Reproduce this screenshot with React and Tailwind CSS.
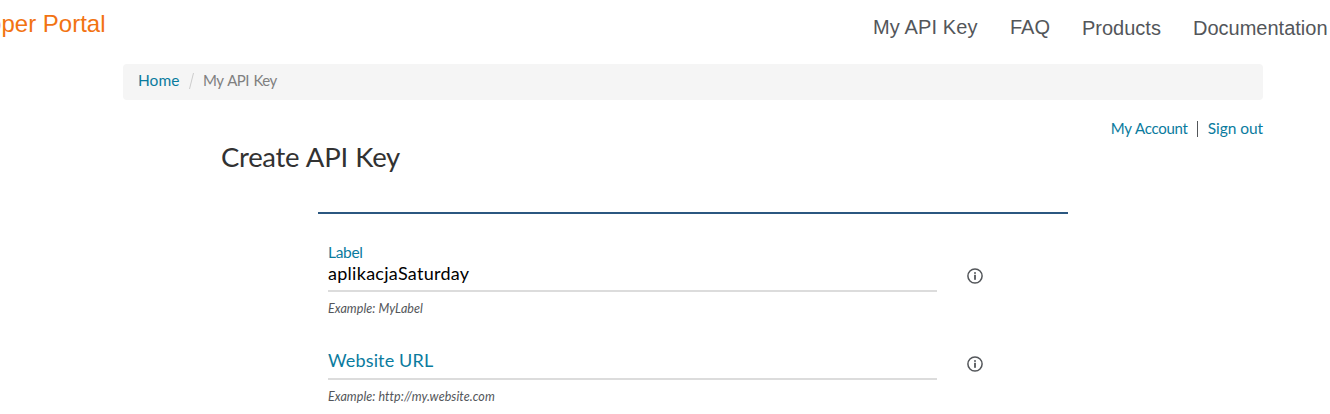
import React from "react";

function InfoIcon() {
  return (
    <svg className="block size-4" viewBox="0 0 16 16" fill="none">
      <circle cx="8" cy="8" r="7.1" stroke="#53565a" strokeWidth="1.5" />
      <rect x="7.1" y="4.2" width="1.8" height="1.6" fill="#53565a" />
      <rect x="7.1" y="6.8" width="1.8" height="5" fill="#53565a" />
    </svg>
  );
}

function Field({ children, example }) {
  return (
    <div className="flex h-[88px]">
      <div className="w-[609px]">
        <div className="flex h-[52px] flex-col justify-end border-b-2 border-[#dcdcdc] pb-[5px]">{children}</div>
        <p className="mt-[8px] text-[12.5px] leading-[18px] text-[#53565a] italic tracking-[0.06px]">{example}</p>
      </div>
      <div className="ml-[30px] pt-[28px]">
        <InfoIcon />
      </div>
    </div>
  );
}

export default function App() {
  return (
    <div className="h-[414px] w-[1330px] overflow-hidden bg-white font-['Lato',sans-serif]">
      <header className="flex h-16 justify-between font-['Liberation_Sans',sans-serif]">
        <div className="flex w-[105.5px] justify-end overflow-hidden pt-[8px] text-[24px] leading-[32px] whitespace-nowrap text-[#f27312]">
          <span>Developer Portal</span>
        </div>
        <nav className="flex pt-[15px] pr-[3px] text-[20px] leading-[24px] whitespace-nowrap text-[#53565a]">
          <a className="w-[137px] tracking-[0.12px]">My API Key</a>
          <a className="w-[72px]">FAQ</a>
          <a className="w-[111px] pt-px">Products</a>
          <a className="w-[134px] pt-px">Documentation</a>
        </nav>
      </header>
      <main className="ml-[123px] w-[1140px]">
        <div className="flex h-9 rounded-[4px] bg-[#f5f5f5] pt-[5px] pl-[15px] text-[15.5px] leading-[22px]">
          <a className="w-[51px] text-[#0a7b9e]">Home</a>
          <svg className="mt-[3px] mr-[9px] h-[18px] w-[5px]" viewBox="0 0 5 18" fill="none">
            <path d="M4.5 1 0.5 17" stroke="#cccccc" />
          </svg>
          <span className="text-[#808080] text-[15px] tracking-[-0.54px] [word-spacing:1.3px]">My API Key</span>
        </div>
        <div className="flex h-[39px] items-end justify-end text-[15.5px] leading-[22px] whitespace-nowrap text-[#0a7b9e]">
          <a className="text-[15px] tracking-[-0.25px] [word-spacing:0.6px]">My Account</a>
          <span className="mb-[2px] ml-[9px] mr-[10px] h-4 w-px bg-[#53565a]" />
          <a className="tracking-[-0.06px]">Sign out</a>
        </div>
        <h1 className="ml-[98px] h-[73px] text-[27.5px] leading-[36px] tracking-[-0.3px] text-[#323232] [word-spacing:0.8px]">Create API Key</h1>
        <section className="ml-[195px] w-[750px] border-t-2 border-[#2b5780] pt-[26px] pl-[10px]">
          <Field example="Example: MyLabel">
            <label className="-mb-px text-[15.5px] leading-[20px] tracking-[-0.3px] text-[#0a7b9e]">Label</label>
            <span className="text-[18px] leading-[24px] tracking-[0.28px] text-black">aplikacjaSaturday</span>
          </Field>
          <Field example="Example: http://my.website.com">
            <label className="mb-px text-[18px] leading-[24px] tracking-[0.16px] text-[#0a7b9e]">Website URL</label>
          </Field>
        </section>
      </main>
    </div>
  );
}
